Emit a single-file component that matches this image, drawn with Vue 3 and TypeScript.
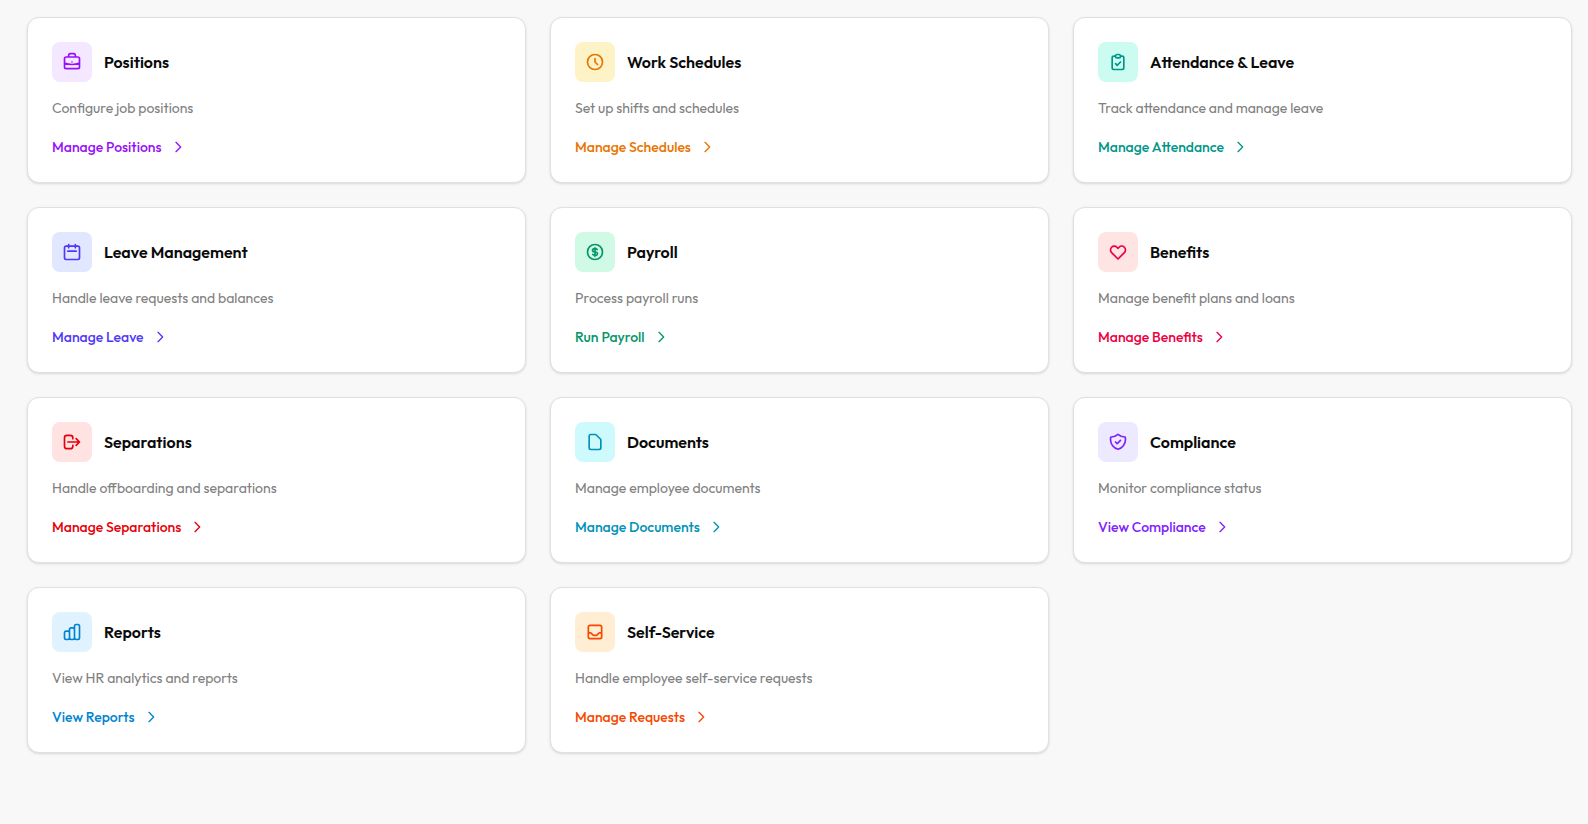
<script setup lang="ts">
interface Module {
  id: string
  title: string
  description: string
  action: string
  color: string
  tint: string
  icon: string
}

const modules: Module[] = [
  {
    id: 'positions',
    title: 'Positions',
    description: 'Configure job positions',
    action: 'Manage Positions',
    color: '#9810fa',
    tint: '#f3e8ff',
    icon: 'M21 13.255A23.931 23.931 0 0112 15c-3.183 0-6.22-.62-9-1.745M16 6V4a2 2 0 00-2-2h-4a2 2 0 00-2 2v2m4 6h.01M5 20h14a2 2 0 002-2V8a2 2 0 00-2-2H5a2 2 0 00-2 2v10a2 2 0 002 2z',
  },
  {
    id: 'schedules',
    title: 'Work Schedules',
    description: 'Set up shifts and schedules',
    action: 'Manage Schedules',
    color: '#e87400',
    tint: '#fef3c6',
    icon: 'M12 8v4l3 3m6-3a9 9 0 11-18 0 9 9 0 0118 0z',
  },
  {
    id: 'attendance',
    title: 'Attendance & Leave',
    description: 'Track attendance and manage leave',
    action: 'Manage Attendance',
    color: '#009689',
    tint: '#cbfbf1',
    icon: 'M9 5H7a2 2 0 00-2 2v12a2 2 0 002 2h10a2 2 0 002-2V7a2 2 0 00-2-2h-2M9 5a2 2 0 002 2h2a2 2 0 002-2M9 5a2 2 0 012-2h2a2 2 0 012 2m-6 9l2 2 4-4',
  },
  {
    id: 'leave',
    title: 'Leave Management',
    description: 'Handle leave requests and balances',
    action: 'Manage Leave',
    color: '#4f39f6',
    tint: '#e0e7ff',
    icon: 'M8 7V3m8 4V3m-9 8h10M5 21h14a2 2 0 002-2V7a2 2 0 00-2-2H5a2 2 0 00-2 2v12a2 2 0 002 2z',
  },
  {
    id: 'payroll',
    title: 'Payroll',
    description: 'Process payroll runs',
    action: 'Run Payroll',
    color: '#059669',
    tint: '#d0fae5',
    icon: 'M12 8c-1.657 0-3 .895-3 2s1.343 2 3 2 3 .895 3 2-1.343 2-3 2m0-8c1.11 0 2.08.402 2.599 1M12 8V7m0 1v8m0 0v1m0-1c-1.11 0-2.08-.402-2.599-1M21 12a9 9 0 11-18 0 9 9 0 0118 0z',
  },
  {
    id: 'benefits',
    title: 'Benefits',
    description: 'Manage benefit plans and loans',
    action: 'Manage Benefits',
    color: '#ec003f',
    tint: '#ffe4e4',
    icon: 'M4.318 6.318a4.5 4.5 0 000 6.364L12 20.364l7.682-7.682a4.5 4.5 0 00-6.364-6.364L12 7.636l-1.318-1.318a4.5 4.5 0 00-6.364 0z',
  },
  {
    id: 'separations',
    title: 'Separations',
    description: 'Handle offboarding and separations',
    action: 'Manage Separations',
    color: '#e7000b',
    tint: '#ffe2e2',
    icon: 'M17 16l4-4m0 0l-4-4m4 4H7m6 4v1a3 3 0 01-3 3H6a3 3 0 01-3-3V7a3 3 0 013-3h4a3 3 0 013 3v1',
  },
  {
    id: 'documents',
    title: 'Documents',
    description: 'Manage employee documents',
    action: 'Manage Documents',
    color: '#0092b8',
    tint: '#cefafe',
    icon: 'M7 21h10a2 2 0 002-2V9.414a1 1 0 00-.293-.707l-5.414-5.414A1 1 0 0012.586 3H7a2 2 0 00-2 2v14a2 2 0 002 2z',
  },
  {
    id: 'compliance',
    title: 'Compliance',
    description: 'Monitor compliance status',
    action: 'View Compliance',
    color: '#7f22fe',
    tint: '#ede9fe',
    icon: 'M9 12l2 2 4-4m5.618-4.016A11.955 11.955 0 0112 2.944a11.955 11.955 0 01-8.618 3.04A12.02 12.02 0 003 9c0 5.591 3.824 10.29 9 11.622 5.176-1.332 9-6.03 9-11.622 0-1.042-.133-2.052-.382-3.016z',
  },
  {
    id: 'reports',
    title: 'Reports',
    description: 'View HR analytics and reports',
    action: 'View Reports',
    color: '#0084d1',
    tint: '#dff2fe',
    icon: 'M9 19v-6a2 2 0 00-2-2H5a2 2 0 00-2 2v6a2 2 0 002 2h2a2 2 0 002-2zm0 0V9a2 2 0 012-2h2a2 2 0 012 2v10m-6 0a2 2 0 002 2h2a2 2 0 002-2m0 0V5a2 2 0 012-2h2a2 2 0 012 2v14a2 2 0 01-2 2h-2a2 2 0 01-2-2z',
  },
  {
    id: 'self-service',
    title: 'Self-Service',
    description: 'Handle employee self-service requests',
    action: 'Manage Requests',
    color: '#f54900',
    tint: '#ffedd4',
    icon: 'M20 13V6a2 2 0 00-2-2H6a2 2 0 00-2 2v7m16 0v5a2 2 0 01-2 2H6a2 2 0 01-2-2v-5m16 0h-2.586a1 1 0 00-.707.293l-2.414 2.414a1 1 0 01-.707.293h-3.172a1 1 0 01-.707-.293l-2.414-2.414A1 1 0 006.586 13H4',
  },
]
</script>

<template>
  <main class="modules">
    <article
      v-for="item in modules"
      :key="item.id"
      class="card"
      :style="{ '--accent': item.color, '--tint': item.tint }"
    >
      <header class="card-header">
        <span class="badge">
          <svg class="badge-icon" viewBox="0 0 24 24" aria-hidden="true">
            <path :d="item.icon" />
          </svg>
        </span>
        <h3 class="title">{{ item.title }}</h3>
      </header>
      <p class="description">{{ item.description }}</p>
      <a class="action" :href="`#${item.id}`">
        {{ item.action }}
        <svg class="chevron" viewBox="0 0 24 24" aria-hidden="true">
          <path d="M9 5l7 7-7 7" />
        </svg>
      </a>
    </article>
  </main>
</template>

<style>
body {
  background: #f8f8f8;
}
</style>

<style scoped>
.modules {
  display: grid;
  grid-template-columns: repeat(3, minmax(0, 1fr));
  gap: 24px;
  padding: 17px 16px 24px 27px;
  font-family: Outfit, Lato, "Liberation Sans", sans-serif;
}

.card {
  display: flex;
  flex-direction: column;
  align-items: flex-start;
  gap: 16px;
  padding: 24px;
  border: 1px solid #e0e0e0;
  border-radius: 12px;
  background: #ffffff;
  box-shadow: 0 1px 3px rgba(0, 0, 0, 0.1), 0 1px 2px -1px rgba(0, 0, 0, 0.1);
}

.card-header {
  display: flex;
  align-items: center;
  gap: 12px;
}

.badge {
  display: flex;
  align-items: center;
  justify-content: center;
  width: 40px;
  height: 40px;
  border-radius: 8px;
  background: var(--tint);
  color: var(--accent);
}

.badge-icon,
.chevron {
  fill: none;
  stroke: currentColor;
  stroke-width: 2;
  stroke-linecap: round;
  stroke-linejoin: round;
}

.badge-icon {
  width: 20px;
  height: 20px;
}

.title {
  margin: 0;
  font-size: 16px;
  font-weight: 600;
  line-height: 24px;
  color: #0a0a0a;
}

.description {
  margin: 0;
  font-size: 14px;
  line-height: 20px;
  color: #808080;
}

.action {
  display: inline-flex;
  align-items: center;
  gap: 8px;
  padding-top: 2px;
  font-size: 14px;
  font-weight: 500;
  line-height: 22px;
  color: var(--accent);
  text-decoration: none;
}

.chevron {
  width: 16px;
  height: 16px;
}
</style>
